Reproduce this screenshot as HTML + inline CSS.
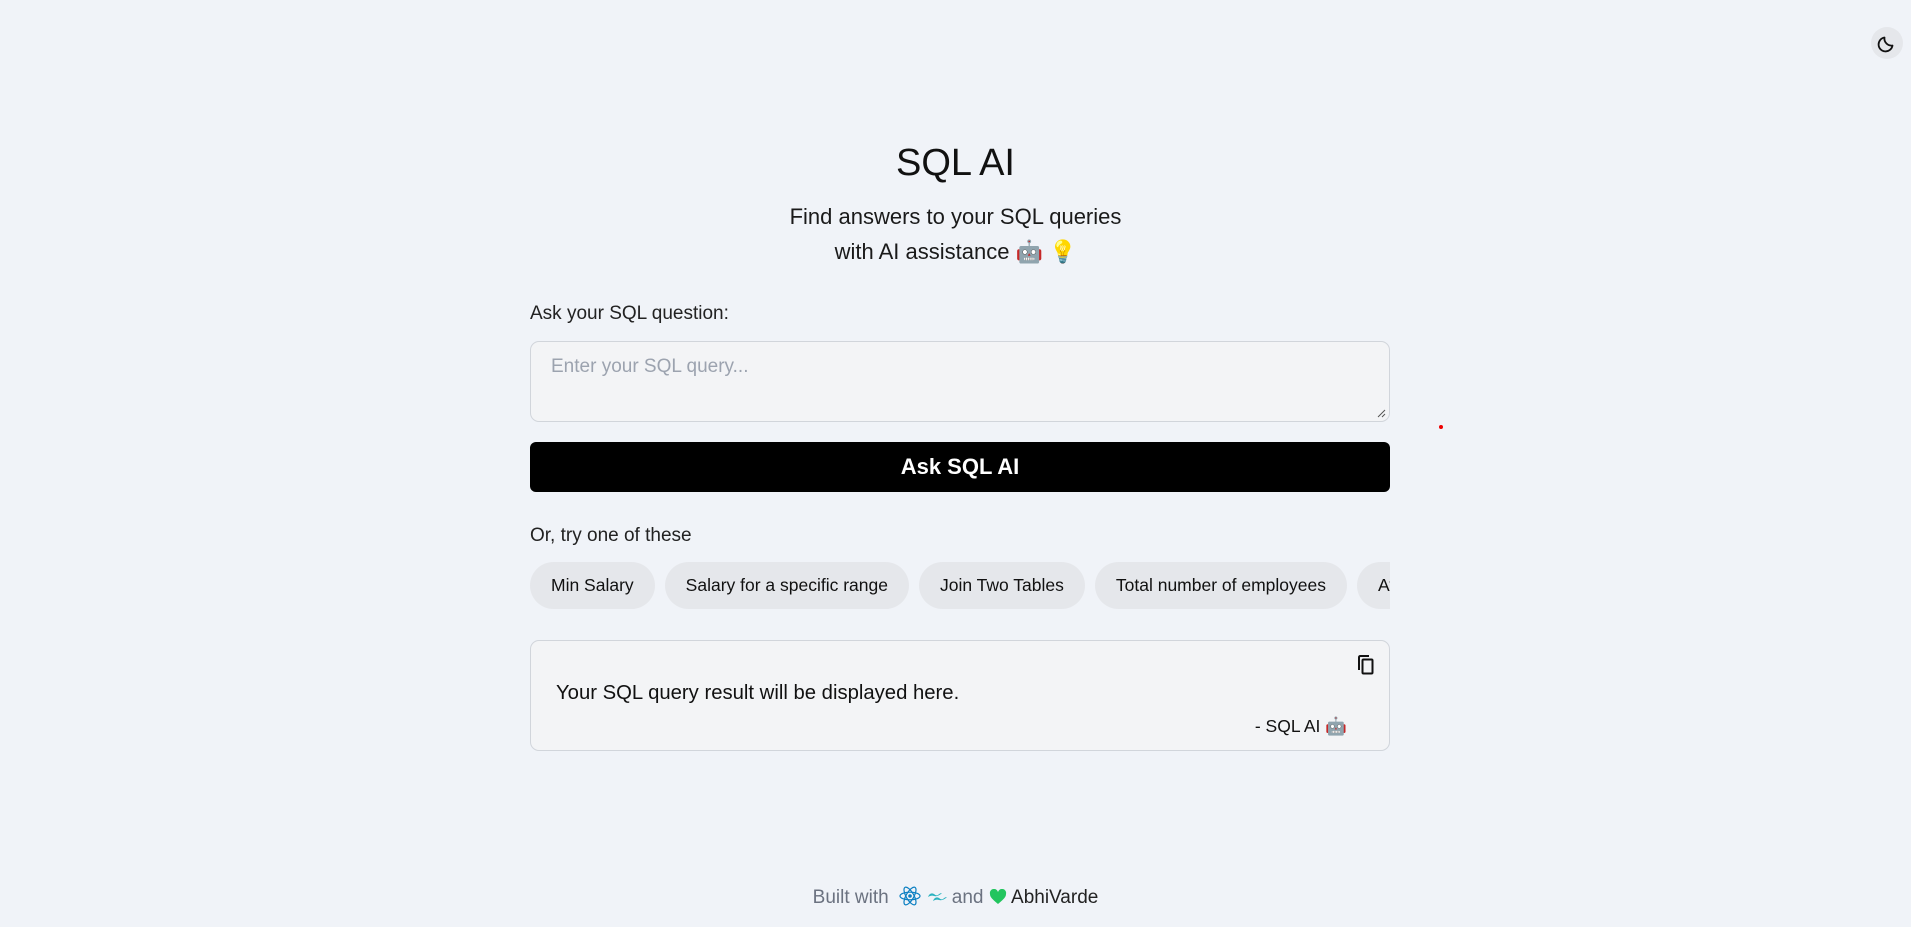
<!DOCTYPE html>
<html><head><meta charset="utf-8"><style>
*{box-sizing:border-box;margin:0;padding:0}
body{width:1911px;height:927px;background:#f0f3f8;font-family:"Liberation Sans","Noto Sans CJK SC",sans-serif;color:#111;position:relative;overflow:hidden}
.abs{position:absolute}
.center{left:0;width:1911px;text-align:center}
h1{font-weight:400;font-size:38px;top:142px;letter-spacing:0}
.sub{font-size:22px;top:199px;line-height:35px;color:#1a1a1a}
.col{left:530px;width:860px}
.label{top:303px;font-size:19px;color:#222}
.ta{top:341px;height:81px;border:1px solid #d1d5db;border-radius:9px;background:#f3f4f6;padding:14px 20px;font-size:19px;color:#9ca3af}
.btn{top:442px;height:50px;background:#000;border-radius:6px;color:#fff;font-weight:700;font-size:22px;text-align:center;line-height:50px}
.or{top:525px;font-size:19px;color:#222}
.chips{top:562px;height:47px;overflow:hidden;white-space:nowrap}
.chip{display:inline-block;height:47px;line-height:47px;background:#e5e7eb;border-radius:24px;padding:0 21px;font-size:17.5px;margin-right:10px;color:#111;vertical-align:top}
.res{top:640px;height:111px;border:1px solid #d1d5db;border-radius:9px;background:#f3f4f6}
.rt{left:25px;top:41px;font-size:20.3px}
.sig{right:42px;top:75px;font-size:17.5px}
.foot{top:886px;font-size:19px;color:#6b7280}
.moon{left:1871px;top:27px;width:32px;height:32px;border-radius:50%;background:#e5e7eb}
</style></head><body>
<div class="abs moon"><svg width="32" height="32" viewBox="0 0 32 32"><path d="M21.5 18.5A7 7 0 0 1 13.5 10.5 7 7 0 1 0 21.5 18.5z" fill="none" stroke="#111" stroke-width="1.8" stroke-linejoin="round"/></svg></div>
<h1 class="abs center">SQL AI</h1>
<div class="abs center sub">Find answers to your SQL queries<br>with AI assistance 🤖 💡</div>
<div class="abs col label">Ask your SQL question:</div>
<div class="abs col ta">Enter your SQL query...
<svg class="abs" style="right:3px;bottom:3px" width="10" height="10"><path d="M9 2L2 9M9 6L6 9" stroke="#555" stroke-width="1"/></svg></div>
<div class="abs col btn">Ask SQL AI</div>
<div class="abs col or">Or, try one of these</div>
<div class="abs col chips"><span class="chip">Min Salary</span><span class="chip">Salary for a specific range</span><span class="chip">Join Two Tables</span><span class="chip">Total number of employees</span><span class="chip">Average salary</span></div>
<div class="abs col res">
<svg class="abs" style="left:825px;top:13px" width="20" height="22" viewBox="0 0 20 22"><path d="M3 16V3.5Q3 2 4.5 2H13" fill="none" stroke="#111" stroke-width="2"/><rect x="6.5" y="5.5" width="10" height="14" rx="1" fill="none" stroke="#111" stroke-width="2"/></svg>
<div class="abs rt">Your SQL query result will be displayed here.</div>
<div class="abs sig">- SQL AI 🤖</div>
</div>
<div class="abs" style="left:1439px;top:425px;width:4px;height:4px;border-radius:50%;background:#e00"></div>
<div class="abs center foot">Built with &nbsp;<svg width="22" height="20" viewBox="-11 -10 22 20" style="vertical-align:-3px"><g fill="none" stroke="#0b7fc2" stroke-width="1.2"><ellipse rx="10" ry="3.8"/><ellipse rx="10" ry="3.8" transform="rotate(60)"/><ellipse rx="10" ry="3.8" transform="rotate(120)"/></g><circle r="1.8" fill="#0b7fc2"/></svg> <svg width="20" height="12" viewBox="0 0 20 12" style="vertical-align:0"><path d="M1 6Q3 1 7 3Q9 5 11 4Q13 2 15 2Q11 6 7 5Q4 4 1 6zM6 10Q8 5 12 7Q14 9 16 8Q18 6 20 6Q16 10 12 9Q9 8 6 10z" fill="#2bb3c0"/></svg> and <svg width="18" height="16" viewBox="0 0 18 16" style="vertical-align:-2px"><path d="M9 15C3 10 1 8 1 5A4 4 0 0 1 9 3 4 4 0 0 1 17 5C17 8 15 10 9 15z" fill="#22c55e"/></svg> <span style="color:#222">AbhiVarde</span></div>
</body></html>
